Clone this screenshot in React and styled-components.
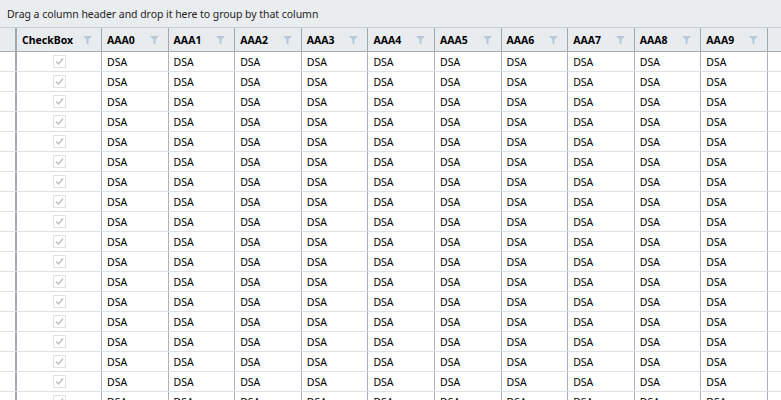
import React from "react";
import styled, { createGlobalStyle } from "styled-components";

const GlobalStyle = createGlobalStyle`
  body {
    margin: 0;
    font-family: "Noto Sans", "Open Sans", sans-serif;
    font-size: 10.5px;
    color: #000;
    background: #fff;
    overflow: hidden;
  }
`;

const Grid = styled.div`
  width: 781px;
  height: 400px;
  overflow: hidden;
`;

const GroupPanel = styled.div`
  height: 28px;
  display: flex;
  align-items: center;
  padding-left: 7px;
  background: #eaedf0;
  border-bottom: 1px solid #c9ced4;
  box-sizing: border-box;
  color: #1e1e1e;
  letter-spacing: -0.05px;
`;

const COLUMNS = "17px 85px repeat(10, 66.6px) 1fr";

const HeaderRow = styled.div`
  display: grid;
  grid-template-columns: ${COLUMNS};
  height: 24px;
  background: #e9ecef;
  border-bottom: 1px solid #a3abb5;
  box-sizing: border-box;
`;

const HeaderCell = styled.div`
  display: flex;
  align-items: center;
  justify-content: space-between;
  padding: 0 9px 0 5px;
  border-right: ${(p) => (p.$indent ? "2px solid #a0a8b2" : p.$last ? "none" : "1px solid #a0a8b2")};
  font-weight: bold;
  overflow: hidden;
  white-space: nowrap;
`;

const Row = styled.div`
  display: grid;
  grid-template-columns: ${COLUMNS};
  height: 20px;
  border-bottom: 1px solid #dde1e6;
  box-sizing: border-box;
`;

const Cell = styled.div`
  display: flex;
  align-items: center;
  justify-content: ${(p) => (p.$center ? "center" : "flex-start")};
  padding-left: ${(p) => (p.$center ? "0" : "5px")};
  border-right: ${(p) => (p.$indent ? "2px solid #a0a8b2" : p.$last ? "none" : "1px solid #aab2bc")};
  overflow: hidden;
  white-space: nowrap;
`;

const FilterIcon = () => (
  <svg width="9" height="8" viewBox="0 0 9 8">
    <path d="M0 0 H9 L5.5 3.5 V8 H3.5 V3.5 Z" fill="#b7c8d9" />
  </svg>
);

const CheckMark = () => (
  <svg width="13" height="13" viewBox="0 0 13 13">
    <rect x="0.5" y="0.5" width="12" height="12" fill="#fff" stroke="#e2e2e2" />
    <path d="M3 6.5 L5.5 9 L10 3.5" fill="none" stroke="#bdbdbd" strokeWidth="1.3" />
  </svg>
);

const columns = ["AAA0", "AAA1", "AAA2", "AAA3", "AAA4", "AAA5", "AAA6", "AAA7", "AAA8", "AAA9"];
const rows = Array.from({ length: 18 }, (_, i) => i);

const App = () => {
  document.title = "Grid";
  return (
    <Grid>
      <GlobalStyle />
      <GroupPanel>Drag a column header and drop it here to group by that column</GroupPanel>
      <HeaderRow>
        <HeaderCell $indent />
        <HeaderCell>
          CheckBox <FilterIcon />
        </HeaderCell>
        {columns.map((c) => (
          <HeaderCell key={c}>
            {c} <FilterIcon />
          </HeaderCell>
        ))}
        <HeaderCell $last />
      </HeaderRow>
      {rows.map((r) => (
        <Row key={r}>
          <Cell $indent />
          <Cell $center>
            <CheckMark />
          </Cell>
          {columns.map((c) => (
            <Cell key={c}>DSA</Cell>
          ))}
          <Cell $last />
        </Row>
      ))}
    </Grid>
  );
};

export default App;
